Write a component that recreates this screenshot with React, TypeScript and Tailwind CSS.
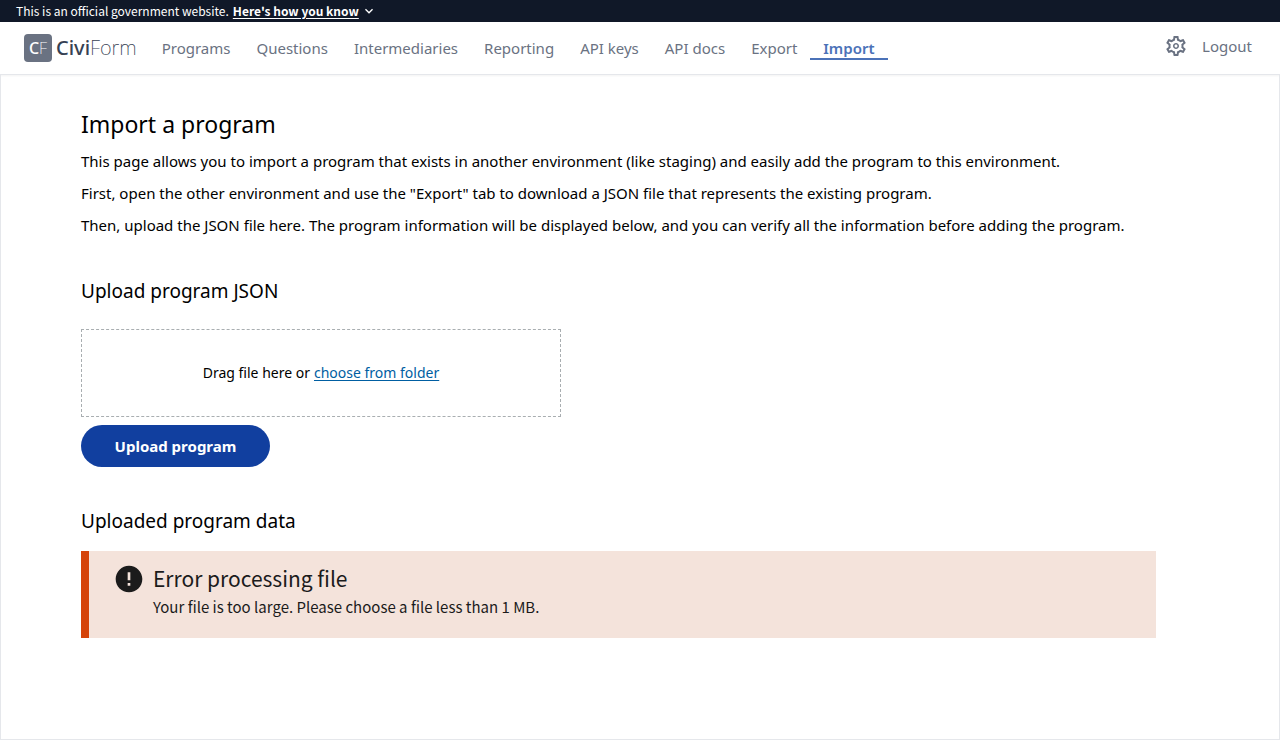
import React from "react";

type NavItem = { label: string; current?: boolean };

const navItems: NavItem[] = [
  { label: "Programs" },
  { label: "Questions" },
  { label: "Intermediaries" },
  { label: "Reporting" },
  { label: "API keys" },
  { label: "API docs" },
  { label: "Export" },
  { label: "Import", current: true },
];

function GovBanner() {
  return (
    <div className="flex h-[22px] items-center gap-1 bg-gray-900 px-4 font-['Noto_Sans_CJK_SC',sans-serif] text-xs leading-4 text-white">
      <span>This is an official government website.</span>
      <button type="button" className="flex items-center gap-0.5 font-bold">
        <span className="underline underline-offset-2">Here's how you know</span>
        <svg viewBox="0 0 24 24" className="size-4" fill="currentColor" aria-hidden="true">
          <path d="M16.59 8.59 12 13.17 7.41 8.59 6 10l6 6 6-6z" />
        </svg>
      </button>
    </div>
  );
}

function Logo() {
  return (
    <a href="#home" className="flex items-center gap-1 font-['Noto_Sans',sans-serif] text-xl">
      <span className="flex size-7 items-center justify-center rounded bg-gray-500 text-base font-medium text-white">
        C<span className="font-extralight">F</span>
      </span>
      <span className="font-medium text-gray-700">
        Civi<span className="font-extralight">Form</span>
      </span>
    </a>
  );
}

function Header() {
  return (
    <header className="flex h-[53px] items-center border-b border-gray-200 bg-white pl-6 pr-7 text-gray-500 shadow-xs">
      <Logo />
      <nav aria-label="Main" className="ml-3 flex">
        {navItems.map((item) =>
          item.current ? (
            <a
              key={item.label}
              href="#import"
              aria-current="page"
              className="border-b-2 border-[#4b72b8] px-[13px] pt-0.5 leading-5 font-semibold text-[#4b72b8]"
            >
              {item.label}
            </a>
          ) : (
            <a key={item.label} href="#nav" className="border-b-2 border-transparent px-[13px] pt-0.5 leading-5">
              {item.label}
            </a>
          ),
        )}
      </nav>
      <div className="mb-1 ml-auto flex items-center gap-3.5">
        <button type="button" aria-label="Settings">
          <svg viewBox="0 0 24 24" className="size-6" fill="currentColor" aria-hidden="true">
            <path d="M19.43 12.98c.04-.32.07-.64.07-.98 0-.34-.03-.66-.07-.98l2.11-1.65c.19-.15.24-.42.12-.64l-2-3.46c-.09-.16-.26-.25-.44-.25-.06 0-.12.01-.17.03l-2.49 1c-.52-.4-1.08-.73-1.69-.98l-.38-2.65C14.46 2.18 14.25 2 14 2h-4c-.25 0-.46.18-.49.42l-.38 2.65c-.61.25-1.17.59-1.69.98l-2.49-1c-.06-.02-.12-.03-.18-.03-.17 0-.34.09-.43.25l-2 3.46c-.13.22-.07.49.12.64l2.11 1.65c-.04.32-.07.65-.07.98 0 .33.03.66.07.98l-2.11 1.65c-.19.15-.24.42-.12.64l2 3.46c.09.16.26.25.44.25.06 0 .12-.01.17-.03l2.49-1c.52.4 1.08.73 1.69.98l.38 2.65c.03.24.24.42.49.42h4c.25 0 .46-.18.49-.42l.38-2.65c.61-.25 1.17-.59 1.69-.98l2.49 1c.06.02.12.03.18.03.17 0 .34-.09.43-.25l2-3.46c.12-.22.07-.49-.12-.64l-2.11-1.65zm-1.98-1.71c.04.31.05.52.05.73 0 .21-.02.43-.05.73l-.14 1.13.89.7 1.08.84-.7 1.21-1.27-.51-1.04-.42-.9.68c-.43.32-.84.56-1.25.73l-1.06.43-.16 1.13-.2 1.35h-1.4l-.19-1.35-.16-1.13-1.06-.43c-.43-.18-.83-.41-1.23-.71l-.91-.7-1.06.43-1.27.51-.7-1.21 1.08-.84.89-.7-.14-1.13c-.03-.31-.05-.54-.05-.74s.02-.43.05-.73l.14-1.13-.89-.7-1.08-.84.7-1.21 1.27.51 1.04.42.9-.68c.43-.32.84-.56 1.25-.73l1.06-.43.16-1.13.2-1.35h1.39l.19 1.35.16 1.13 1.06.43c.43.18.83.41 1.23.71l.91.7 1.06-.43 1.27-.51.7 1.21-1.07.85-.89.7.14 1.13zM12 9c-1.66 0-3 1.34-3 3s1.34 3 3 3 3-1.34 3-3-1.34-3-3-3zm0 4.500c-.83 0-1.500-.67-1.500-1.500s.67-1.500 1.500-1.500 1.500.67 1.500 1.500-.67 1.500-1.500 1.500z" fillRule="evenodd" />
          </svg>
        </button>
        <a href="#logout">Logout</a>
      </div>
    </header>
  );
}

function ErrorAlert() {
  return (
    <div
      role="alert"
      className="flex gap-2 border-l-8 border-[#d54309] bg-[#f4e3db] pt-3 pr-5 pb-4 pl-6 font-['Noto_Sans_CJK_SC',sans-serif] text-[#1b1b1b]"
    >
      <svg viewBox="0 0 24 24" className="size-8 shrink-0" fill="currentColor" aria-hidden="true">
        <path d="M12 2C6.48 2 2 6.48 2 12s4.48 10 10 10 10-4.48 10-10S17.52 2 12 2zm1 15h-2v-2h2v2zm0-4h-2V7h2v6z" />
      </svg>
      <div>
        <h4 className="text-[21px] leading-[30px]">Error processing file</h4>
        <p className="pb-0.5 text-[15px] leading-[27px]">Your file is too large. Please choose a file less than 1 MB.</p>
      </div>
    </div>
  );
}

export default function App() {
  return (
    <div className="flex min-h-screen flex-col bg-white font-['Noto_Sans',sans-serif] text-[15px] text-black">
      <GovBanner />
      <Header />
      <main className="grow border border-t-0 border-gray-200 px-20 pt-8 pb-20">
        <div className="max-w-[1075px]">
          <h1 className="mb-2 text-[23px] leading-[34px]">Import a program</h1>
          <div className="flex flex-col gap-2 leading-6">
            <p>
              This page allows you to import a program that exists in another environment (like staging) and easily add
              the program to this environment.
            </p>
            <p>
              First, open the other environment and use the "Export" tab to download a JSON file that represents the
              existing program.
            </p>
            <p>
              Then, upload the JSON file here. The program information will be displayed below, and you can verify all
              the information before adding the program.
            </p>
          </div>

          <h2 className="mt-10 mb-6 text-[19px] leading-7">Upload program JSON</h2>
          <form>
            <label className="flex h-[88px] max-w-[480px] cursor-pointer items-center justify-center gap-1 border border-dashed border-[#a9aeb1] text-sm">
              <span>Drag file here or</span>
              <span className="text-[#005ea2] underline underline-offset-2">choose from folder</span>
              <input type="file" accept=".json" className="sr-only" />
            </label>
            <button
              type="button"
              className="mt-2 h-[42px] w-[189px] rounded-full bg-[#113f9f] font-bold text-white"
            >
              Upload program
            </button>
          </form>

          <h2 className="mt-10 mb-4 text-[19px] leading-7">Uploaded program data</h2>
          <ErrorAlert />
        </div>
      </main>
    </div>
  );
}
